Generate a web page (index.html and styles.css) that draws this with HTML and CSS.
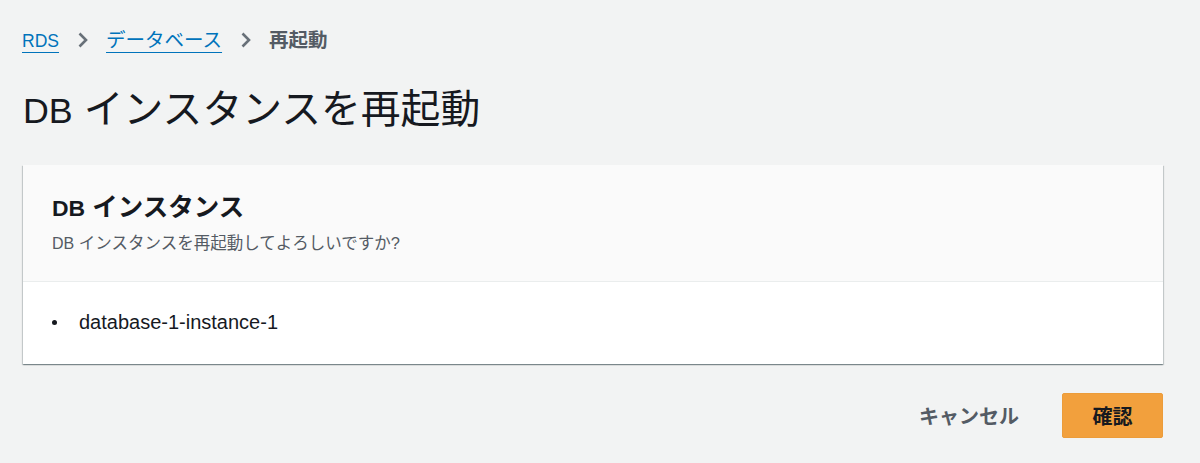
FILE: index.html
```html
<!DOCTYPE html>
<html lang="ja">
<head>
<meta charset="utf-8">
<link rel="stylesheet" href="styles.css">
</head>
<body>
<div class="page">
  <nav class="crumbs">
    <a class="crumb-link" href="#"><span class="lat">RDS</span></a>
    <svg class="chev" width="10" height="16" viewBox="0 0 10 16"><path d="M1.5 1.5l6.5 6.5-6.5 6.5" fill="none" stroke="#687078" stroke-width="2.6"/></svg>
    <a class="crumb-link" href="#">データベース</a>
    <svg class="chev" width="10" height="16" viewBox="0 0 10 16"><path d="M1.5 1.5l6.5 6.5-6.5 6.5" fill="none" stroke="#687078" stroke-width="2.6"/></svg>
    <span class="crumb-current">再起動</span>
  </nav>
  <h1 class="title"><span class="lat">DB</span> インスタンスを再起動</h1>
  <section class="card">
    <div class="card-head">
      <h2 class="card-title"><span class="lat">DB</span> インスタンス</h2>
      <p class="card-desc"><span class="lat-s">DB</span> インスタンスを再起動してよろしいですか?</p>
    </div>
    <div class="card-body">
      <ul class="list">
        <li class="list-item">database-1-instance-1</li>
      </ul>
    </div>
  </section>
  <div class="actions">
    <button class="btn-link">キャンセル</button>
    <button class="btn-primary">確認</button>
  </div>
</div>
</body>
</html>
```

FILE: styles.css
```css
* { box-sizing: border-box; }
html, body { margin: 0; padding: 0; }
body {
  background: #f2f3f3;
  font-family: "Liberation Sans", "Noto Sans CJK JP", sans-serif;
  color: #16191f;
  width: 1200px;
  height: 463px;
  overflow: hidden;
}
.lat { font-size: 0.9em; line-height: 1; }
.lat-s { font-size: 0.97em; line-height: 1; }
.page {
  padding: 26px 37px 0 22px;
}
.crumbs {
  display: flex;
  align-items: center;
  height: 28px;
  font-size: 19.5px;
  line-height: 28px;
}
.crumb-link {
  color: #0073bb;
  text-decoration: underline;
  text-underline-offset: 5px;
  text-decoration-thickness: 1px;
}
.chev {
  margin: 0 18px 0 19px;
}
.crumb-current {
  color: #545b64;
  font-weight: 700;
}
.title {
  margin: 32px 0 0 1px;
  font-size: 39.8px;
  font-weight: 400;
  line-height: 46px;
  color: #16191f;
}
.card {
  margin: 33px 0 0 1px;
  background: #fff;
  box-shadow: 0 1px 1px 0 rgba(0, 28, 36, 0.3), 1px 1px 1px 0 rgba(0, 28, 36, 0.15), -1px 1px 1px 0 rgba(0, 28, 36, 0.15);
}
.card-head {
  background: #fafafa;
  border-bottom: 1px solid #eaeded;
  padding: 27px 29px 0;
  height: 117px;
}
.card-title {
  margin: 0;
  font-size: 25.5px;
  font-weight: 700;
  line-height: 30px;
}
.card-title .lat { font-size: 0.9em; }
.card-desc {
  margin: 10px 0 0;
  font-size: 16.5px;
  line-height: 22px;
  color: #545b64;
}
.card-body {
  height: 82px;
  padding: 26px 29px 0;
}
.list {
  margin: 0;
  padding: 0;
  list-style: none;
  font-size: 20px;
  line-height: 28px;
}
.list-item {
  display: flex;
  align-items: center;
  gap: 22px;
}
.list-item::before {
  content: "";
  width: 5px;
  height: 5px;
  border-radius: 50%;
  background: #16191f;
}
.actions {
  display: flex;
  justify-content: flex-end;
  align-items: center;
  gap: 43px;
  margin-top: 29px;
}
.btn-link {
  border: 0;
  background: none;
  font-family: inherit;
  font-size: 20px;
  font-weight: 700;
  color: #545b64;
  padding: 0;
}
.btn-primary {
  width: 101px;
  height: 45px;
  border: 1px solid #ec9c3a;
  border-radius: 2px;
  background: #f2a03d;
  font-family: inherit;
  font-size: 20px;
  font-weight: 700;
  color: #16191f;
  padding: 0;
}
```
